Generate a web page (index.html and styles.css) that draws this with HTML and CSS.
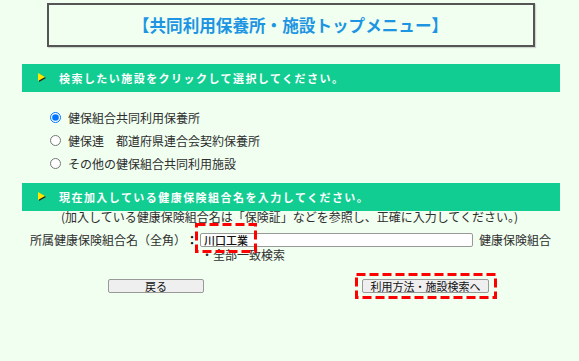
FILE: index.html
```html
<!DOCTYPE html>
<html lang="ja">
<head>
<meta charset="utf-8">
<title>共同利用保養所・施設トップメニュー</title>
<link rel="stylesheet" href="styles.css">
</head>
<body>
<div class="title"><h1>【共同利用保養所・施設トップメニュー】</h1></div>

<div class="bar bar-first">
  <svg class="arrow" width="8" height="9" viewBox="0 0 8 9"><polygon points="1,1 8,5 1,9" fill="#222"/><polygon points="0,0 7,4 0,8" fill="#ffe800"/></svg>
  <span>検索したい施設をクリックして選択してください。</span>
</div>

<div class="choices">
  <label class="choice"><input type="radio" name="kind" checked><span>健保組合共同利用保養所</span></label>
  <label class="choice"><input type="radio" name="kind"><span>健保連　都道府県連合会契約保養所</span></label>
  <label class="choice"><input type="radio" name="kind"><span>その他の健保組合共同利用施設</span></label>
</div>

<div class="bar">
  <svg class="arrow" width="8" height="9" viewBox="0 0 8 9"><polygon points="1,1 8,5 1,9" fill="#222"/><polygon points="0,0 7,4 0,8" fill="#ffe800"/></svg>
  <span>現在加入している健康保険組合名を入力してください。</span>
</div>

<p class="note">(加入している健康保険組合名は「保険証」などを参照し、正確に入力してください。)</p>

<div class="field">
  <span class="label">所属健康保険組合名（全角）</span><span class="colon">：</span>
  <span class="input-wrap"><input class="name" type="text" value="川口工業"><svg class="mark mark-input" width="62" height="30" viewBox="0 0 62 30"><rect x="1.5" y="1.5" width="59" height="27" fill="none" stroke="#f00" stroke-width="3" stroke-dasharray="9 4"/></svg></span>
  <span class="suffix">健康保険組合</span>
</div>
<div class="hint">・全部一致検索</div>

<div class="buttons">
  <button class="btn btn-back">戻る</button>
  <span class="btn-wrap"><button class="btn btn-next">利用方法・施設検索へ</button><svg class="mark mark-btn" width="142" height="26" viewBox="0 0 142 26"><rect x="1.5" y="1.5" width="139" height="23" fill="none" stroke="#f00" stroke-width="3" stroke-dasharray="9 4"/></svg></span>
</div>
</body>
</html>
```

FILE: styles.css
```css
html, body {
  margin: 0;
  padding: 0;
}
body {
  background: #f0fff0;
  font-family: "Noto Sans CJK JP", "Noto Sans", sans-serif;
  font-size: 12px;
  color: #2e2e2e;
  width: 579px;
  height: 361px;
  overflow: hidden;
}
.title {
  box-sizing: border-box;
  width: 488px;
  height: 44px;
  margin: 3px 0 0 47px;
  border: 2px solid #555;
  display: flex;
  align-items: center;
  justify-content: center;
  box-shadow: 1px 1px 1px rgba(0,0,0,0.15);
}
.title h1 {
  margin: 0 0 0 -1px;
  font-size: 16.6px;
  font-weight: bold;
  line-height: 20px;
  color: #1e95e2;
}
.bar {
  box-sizing: border-box;
  width: 538px;
  height: 28px;
  margin-left: 22px;
  background: #12cd92;
  display: flex;
  align-items: center;
  padding-left: 16px;
  color: #fff;
  font-weight: bold;
  font-size: 11px;
  letter-spacing: 1.45px;
  line-height: 14px;
}
.bar-first {
  margin-top: 17px;
}
.arrow {
  flex: none;
  margin-right: 13px;
  margin-top: -1px;
}
.choices {
  padding: 14px 0 8px 50px;
}
.choice {
  display: flex;
  align-items: center;
  height: 23px;
}
.choice input {
  width: 11px;
  height: 11px;
  margin: 0 7px 0 0;
}
.note {
  margin: 0;
  height: 12px;
  line-height: 12px;
  text-align: center;
  font-size: 12px;
}
.field {
  display: flex;
  align-items: center;
  height: 14px;
  margin-top: 10px;
  padding-left: 30px;
}
.label {
  line-height: 14px;
}
.colon {
  font-weight: bold;
  color: #111;
  line-height: 14px;
}
.input-wrap {
  position: relative;
  display: block;
  margin-left: 2px;
}
.name {
  display: block;
  box-sizing: border-box;
  width: 273px;
  height: 14px;
  margin: 0;
  padding: 0 0 0 3px;
  border: 1px solid #999;
  border-radius: 2px;
  background: #fff;
  font-family: "Noto Sans CJK JP", sans-serif;
  font-size: 11px;
  font-weight: 500;
  color: #111;
  line-height: 12px;
}
.suffix {
  margin-left: 6px;
  line-height: 14px;
}
.mark {
  position: absolute;
  display: block;
  pointer-events: none;
}
.mark-input {
  left: -5px;
  top: -10px;
}
.hint {
  margin: 2px 0 0 201px;
  height: 12px;
  line-height: 12px;
}
.buttons {
  display: flex;
  align-items: center;
  margin-top: 18px;
  padding-left: 108px;
}
.btn {
  box-sizing: border-box;
  height: 14px;
  margin: 0;
  padding: 0;
  border: 1px solid #999;
  border-radius: 2px;
  background: #efefef;
  font-family: "Noto Sans CJK JP", sans-serif;
  font-size: 11px;
  line-height: 12px;
  color: #111;
}
.btn-back {
  width: 96px;
}
.btn-wrap {
  position: relative;
  display: block;
  margin-left: 158px;
}
.btn-next {
  display: block;
  width: 127px;
}
.mark-btn {
  left: -7px;
  top: -6px;
}
```
